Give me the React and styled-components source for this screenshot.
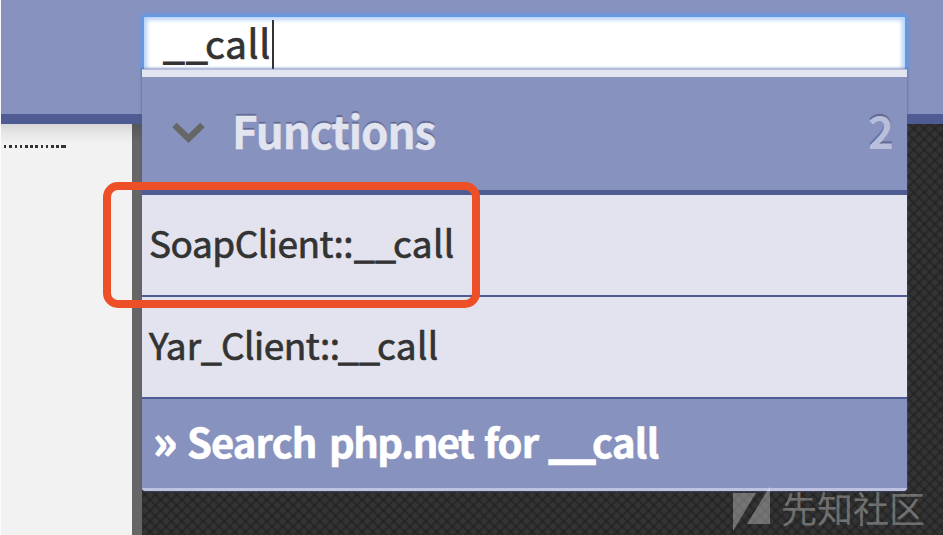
import React from "react";
import styled, { createGlobalStyle } from "styled-components";

const GlobalStyle = createGlobalStyle`
  * { box-sizing: border-box; }
  body { margin: 0; overflow: hidden; background: #f2f2f2; }
`;

const Page = styled.div`
  position: relative;
  width: 943px;
  height: 535px;
  overflow: hidden;
  border-left: 1px solid #fbfbfd;
  display: flex;
  flex-direction: column;
  font-family: "Noto Sans CJK SC", "Noto Sans", sans-serif;
  color: #333;
`;

const Header = styled.header`
  height: 124px;
  flex: none;
  background: #8892bf;
  border-bottom: 10px solid #4f5b93;
  padding: 17px 0 0 143px;
`;

const SearchField = styled.div`
  width: 761px;
  height: 55px;
  background: #fff;
  border-radius: 2px;
  box-shadow: inset 0 0 4px 3px #b5d2f8, 0 0 2px 2px #6499e6, 0 0 4px 3px #6499e6;
  display: flex;
  padding-left: 19px;
`;

const Body = styled.main`
  flex: 1;
  display: flex;
`;

const Paper = styled.section`
  width: 131px;
  background: linear-gradient(#d6d6d6, #e5e5e5 8px, #f2f2f2 20px);
  padding: 21px 0 0 2px;
`;

const Dots = styled.div`
  width: 64px;
  height: 3px;
  background:
    linear-gradient(#333, #333) 58px 0 / 5px 3px no-repeat,
    repeating-linear-gradient(90deg, transparent 0 1px, #333 1px 3.5px, transparent 3.5px 5.25px);
`;

const Gutter = styled.div`
  width: 10px;
  background: linear-gradient(#575757, #666 18px);
`;

const Texture = styled.div`
  flex: 1;
  background:
    repeating-linear-gradient(45deg, rgba(30,30,30,.5) 0 1px, transparent 2.4px 6.1px, rgba(30,30,30,.5) 7.5px),
    repeating-linear-gradient(-45deg, rgba(30,30,30,.5) 0 1px, transparent 2.4px 6.1px, rgba(30,30,30,.5) 7.5px),
    #343434;
`;

const Menu = styled.div`
  position: absolute;
  left: 141px;
  top: 69px;
  width: 765px;
  height: 422px;
  display: flex;
  flex-direction: column;
  background: #e2e4ef;
  border-top: 1px solid #b9bfdb;
  border-radius: 0 0 4px 4px;
  overflow: hidden;
  box-shadow: 0 0 2px 1px rgba(79, 91, 147, .45);
`;

const GroupHeader = styled.div`
  height: 118px;
  flex: none;
  margin-top: 7px;
  background: #8892bf;
  border-bottom: 5px solid #4f5b93;
  display: flex;
  align-items: flex-start;
  padding: 0 13px 0 30px;
  text-shadow: 0 -2px 1px rgba(70, 78, 120, .65);
`;

const Chevron = styled.svg`
  width: 34px;
  height: 24px;
  margin: 44px 26px 0 0;
`;

const Count = styled.div`
  margin-left: auto;
`;

const Item = styled.div`
  height: 102px;
  flex: none;
  background: #e2e3ee;
  border-bottom: 2px solid #4f5b93;
  padding-left: 7px;
`;

const Footer = styled.div`
  height: 92px;
  flex: none;
  background: #8892bf;
  border-bottom: 3px solid #bcc2df;
  padding-left: 11px;
`;

const Line = styled.div`
  display: flex;
  height: ${(p) => p.$h}px;
  line-height: ${(p) => p.$h}px;
  font-size: ${(p) => p.$size}px;
  font-weight: ${(p) => p.$weight || 400};
  color: ${(p) => p.$color || "#333"};
  -webkit-text-stroke: ${(p) => p.$stroke || 0}px currentColor;
  white-space: pre;
`;

const Run = styled.span`
  display: block;
  flex: none;
  width: ${(p) => p.$w}px;
  letter-spacing: ${(p) => p.$ls || 0}px;
`;

const Blanks = styled(Run)`
  -webkit-text-stroke-width: ${(p) => p.$bar || 1.2}px;
`;

const Quote = styled(Run)`
  font-size: 46px;
  line-height: 80px;
  -webkit-text-stroke-width: 1.2px;
`;

const Caret = styled.div`
  width: 2px;
  height: 49px;
  margin-top: 3px;
  background: #333;
`;

const Highlight = styled.div`
  position: absolute;
  left: 102px;
  top: 182px;
  width: 377px;
  height: 126px;
  border: 8px solid #ed5026;
  border-radius: 15px;
`;

const Watermark = styled.div`
  position: absolute;
  left: 732px;
  top: 484px;
  display: flex;
  color: rgba(255, 255, 255, .32);
`;

const Mark = styled.svg`
  width: 38px;
  height: 49px;
  margin-right: 10px;
`;

const MarkText = styled.div`
  font-size: 36px;
  line-height: 46px;
`;

export default function App() {
  return (
    <Page>
      <GlobalStyle />
      <Header>
        <SearchField>
          <Line $h={51} $size={39} $stroke={0.7}>
            <Blanks $w={42} $ls={1.2}>__</Blanks>
            <Run $w={67} $ls={0.6}>call</Run>
          </Line>
          <Caret />
        </SearchField>
      </Header>
      <Body>
        <Paper><Dots /></Paper>
        <Gutter />
        <Texture />
      </Body>
      <Menu>
        <GroupHeader>
          <Chevron viewBox="0 0 34 24">
            <path d="M2.5 4 L16.5 17.5 L30.5 4" fill="none" stroke="#666" strokeWidth="6.5" />
          </Chevron>
          <Line $h={106} $size={44} $weight={700} $color="#e2e4ef" $stroke={0.4}>
            <Run $w={210} $ls={-1.1}>Functions</Run>
          </Line>
          <Count>
            <Line $h={106} $size={44} $weight={700} $color="#b9bfdb">2</Line>
          </Count>
        </GroupHeader>
        <Item>
          <Line $h={94} $size={37} $stroke={0.7}>
            <Run $w={205} $ls={-0.5}>SoapClient::</Run>
            <Blanks $w={39} $ls={0.5}>__</Blanks>
            <Run $w={67} $ls={0.3}>call</Run>
          </Line>
        </Item>
        <Item>
          <Line $h={94} $size={37} $stroke={0.7}>
            <Run $w={52}>Yar</Run>
            <Blanks $w={20} $ls={0.5}>_</Blanks>
            <Run $w={117} $ls={-0.5}>Client::</Run>
            <Blanks $w={39} $ls={0.5}>__</Blanks>
            <Run $w={67} $ls={0.3}>call</Run>
          </Line>
        </Item>
        <Footer>
          <Line $h={84} $size={40} $weight={700} $color="#fff" $stroke={0.6}>
            <Quote $w={34}>»</Quote>
            <Run $w={142} $ls={-0.9}>Search</Run>
            <Run $w={155} $ls={-1.5}>php.net</Run>
            <Run $w={65} $ls={-0.9}>for</Run>
            <Blanks $w={43} $ls={0.9} $bar={2.6}>__</Blanks>
            <Run $w={70} $ls={-0.7}>call</Run>
          </Line>
        </Footer>
      </Menu>
      <Highlight />
      <Watermark>
        <Mark viewBox="0 0 38 49">
          <path d="M0 9 H23 L0 47 Z M37 2 V40 H14 Z" fill="currentColor" />
        </Mark>
        <MarkText>先知社区</MarkText>
      </Watermark>
    </Page>
  );
}
